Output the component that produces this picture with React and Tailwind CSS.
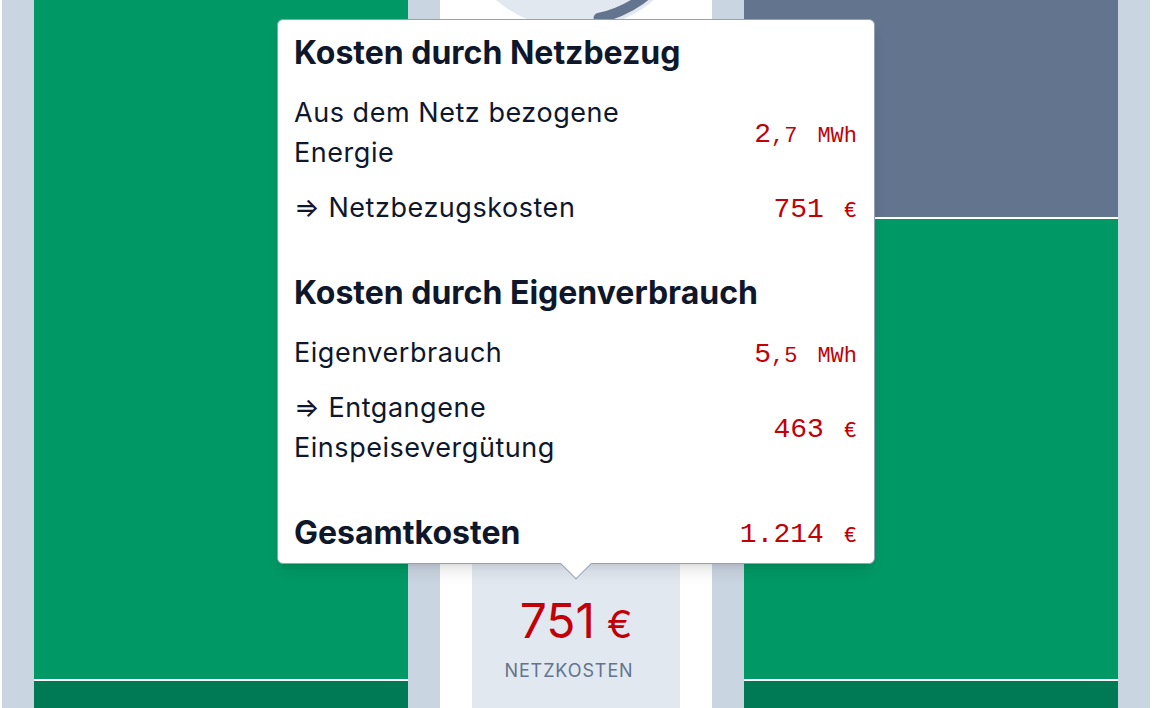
import React from 'react';

const rows1 = [
  { label: "Aus dem Netz bezogene Energie", big: "2", small: ",7", unit: "MWh" },
  { label: "⇒ Netzbezugskosten", big: "751", small: "", unit: "€" },
];

const rows2 = [
  { label: "Eigenverbrauch", big: "5", small: ",5", unit: "MWh" },
  { label: "⇒ Entgangene Einspeisevergütung", big: "463", small: "", unit: "€" },
];

function Value({ big, small, unit }) {
  return (
    <div className="shrink-0 whitespace-nowrap pt-[4px] font-['Liberation_Mono',monospace] leading-none text-[#c10007]">
      <span className="text-[28px]">{big}</span>
      {small && <span className="text-[22px]">{small}</span>}
      <span className="ml-[20px] text-[22px]">{unit}</span>
    </div>
  );
}

function Row({ label, big, small, unit }) {
  return (
    <div className="flex items-center justify-between">
      <div className="w-[370px] text-[27px] leading-[40px] tracking-[0.02em]">{label}</div>
      <Value big={big} small={small} unit={unit} />
    </div>
  );
}

function Section({ title, rows }) {
  return (
    <div>
      <h3 className="text-[32px] font-bold leading-[40px]">{title}</h3>
      <div className="mt-[20px] flex flex-col gap-[15px]">
        {rows.map((r) => (
          <Row key={r.label} {...r} />
        ))}
      </div>
    </div>
  );
}

export default function App() {
  return (
    <div className="relative flex h-[708px] w-[1154px] overflow-hidden bg-white px-[2px] font-['Inter',sans-serif]">
      {/* linke Spalte */}
      <div className="w-[438px] bg-[#cad5e2] px-[32px]">
        <div className="flex h-full flex-col gap-[2px] bg-white">
          <div className="flex-1 bg-[#009966]" />
          <div className="h-[27px] bg-[#007a55]" />
        </div>
      </div>

      {/* Mitte */}
      <div className="flex w-[272px] flex-col bg-white px-[32px]">
        <svg viewBox="0 0 208 30" className="h-[30px] w-[208px] overflow-hidden">
          <circle cx="103" cy="-93" r="122" fill="#e2e8f0" />
          <path
            d="M 209.7 -131.8 A 113.5 113.5 0 0 1 126.6 18"
            fill="none"
            stroke="#62748e"
            strokeWidth="10"
            strokeLinecap="round"
          />
        </svg>
        <div className="mt-auto flex h-[230px] flex-col items-center justify-end bg-[#e2e8f0] pb-[25px]">
          <div className="flex items-baseline leading-none text-[#c10007]">
            <span className="text-[48px]">751</span>
            <span className="ml-[12px] text-[38px]">€</span>
          </div>
          <div className="mr-[14px] mt-[14px] text-[18px] leading-[24px] tracking-[0.05em] text-[#62748e]">
            NETZKOSTEN
          </div>
        </div>
      </div>

      {/* rechte Spalte */}
      <div className="w-[438px] bg-[#cad5e2] px-[32px]">
        <div className="flex h-full flex-col gap-[2px] bg-white">
          <div className="h-[217px] bg-[#62748e]" />
          <div className="flex-1 bg-[#009966]" />
          <div className="h-[27px] bg-[#007a55]" />
        </div>
      </div>

      {/* Tooltip */}
      <div className="absolute left-[277px] top-[19px] w-[598px] rounded-md border border-[#90a1b9] bg-white pb-[10px] pl-[16px] pr-[17px] pt-[13px] text-[#0f172b] shadow-lg">
        <Section title="Kosten durch Netzbezug" rows={rows1} />
        <div className="mt-[45px]">
          <Section title="Kosten durch Eigenverbrauch" rows={rows2} />
        </div>
        <div className="mt-[45px] flex items-center justify-between">
          <h3 className="text-[32px] font-bold leading-[40px]">Gesamtkosten</h3>
          <Value big="1.214" unit="€" />
        </div>
        <div className="absolute bottom-[-12px] left-1/2 h-[22px] w-[22px] -translate-x-1/2 rotate-45 border-b border-r border-[#90a1b9] bg-white" />
      </div>
    </div>
  );
}
